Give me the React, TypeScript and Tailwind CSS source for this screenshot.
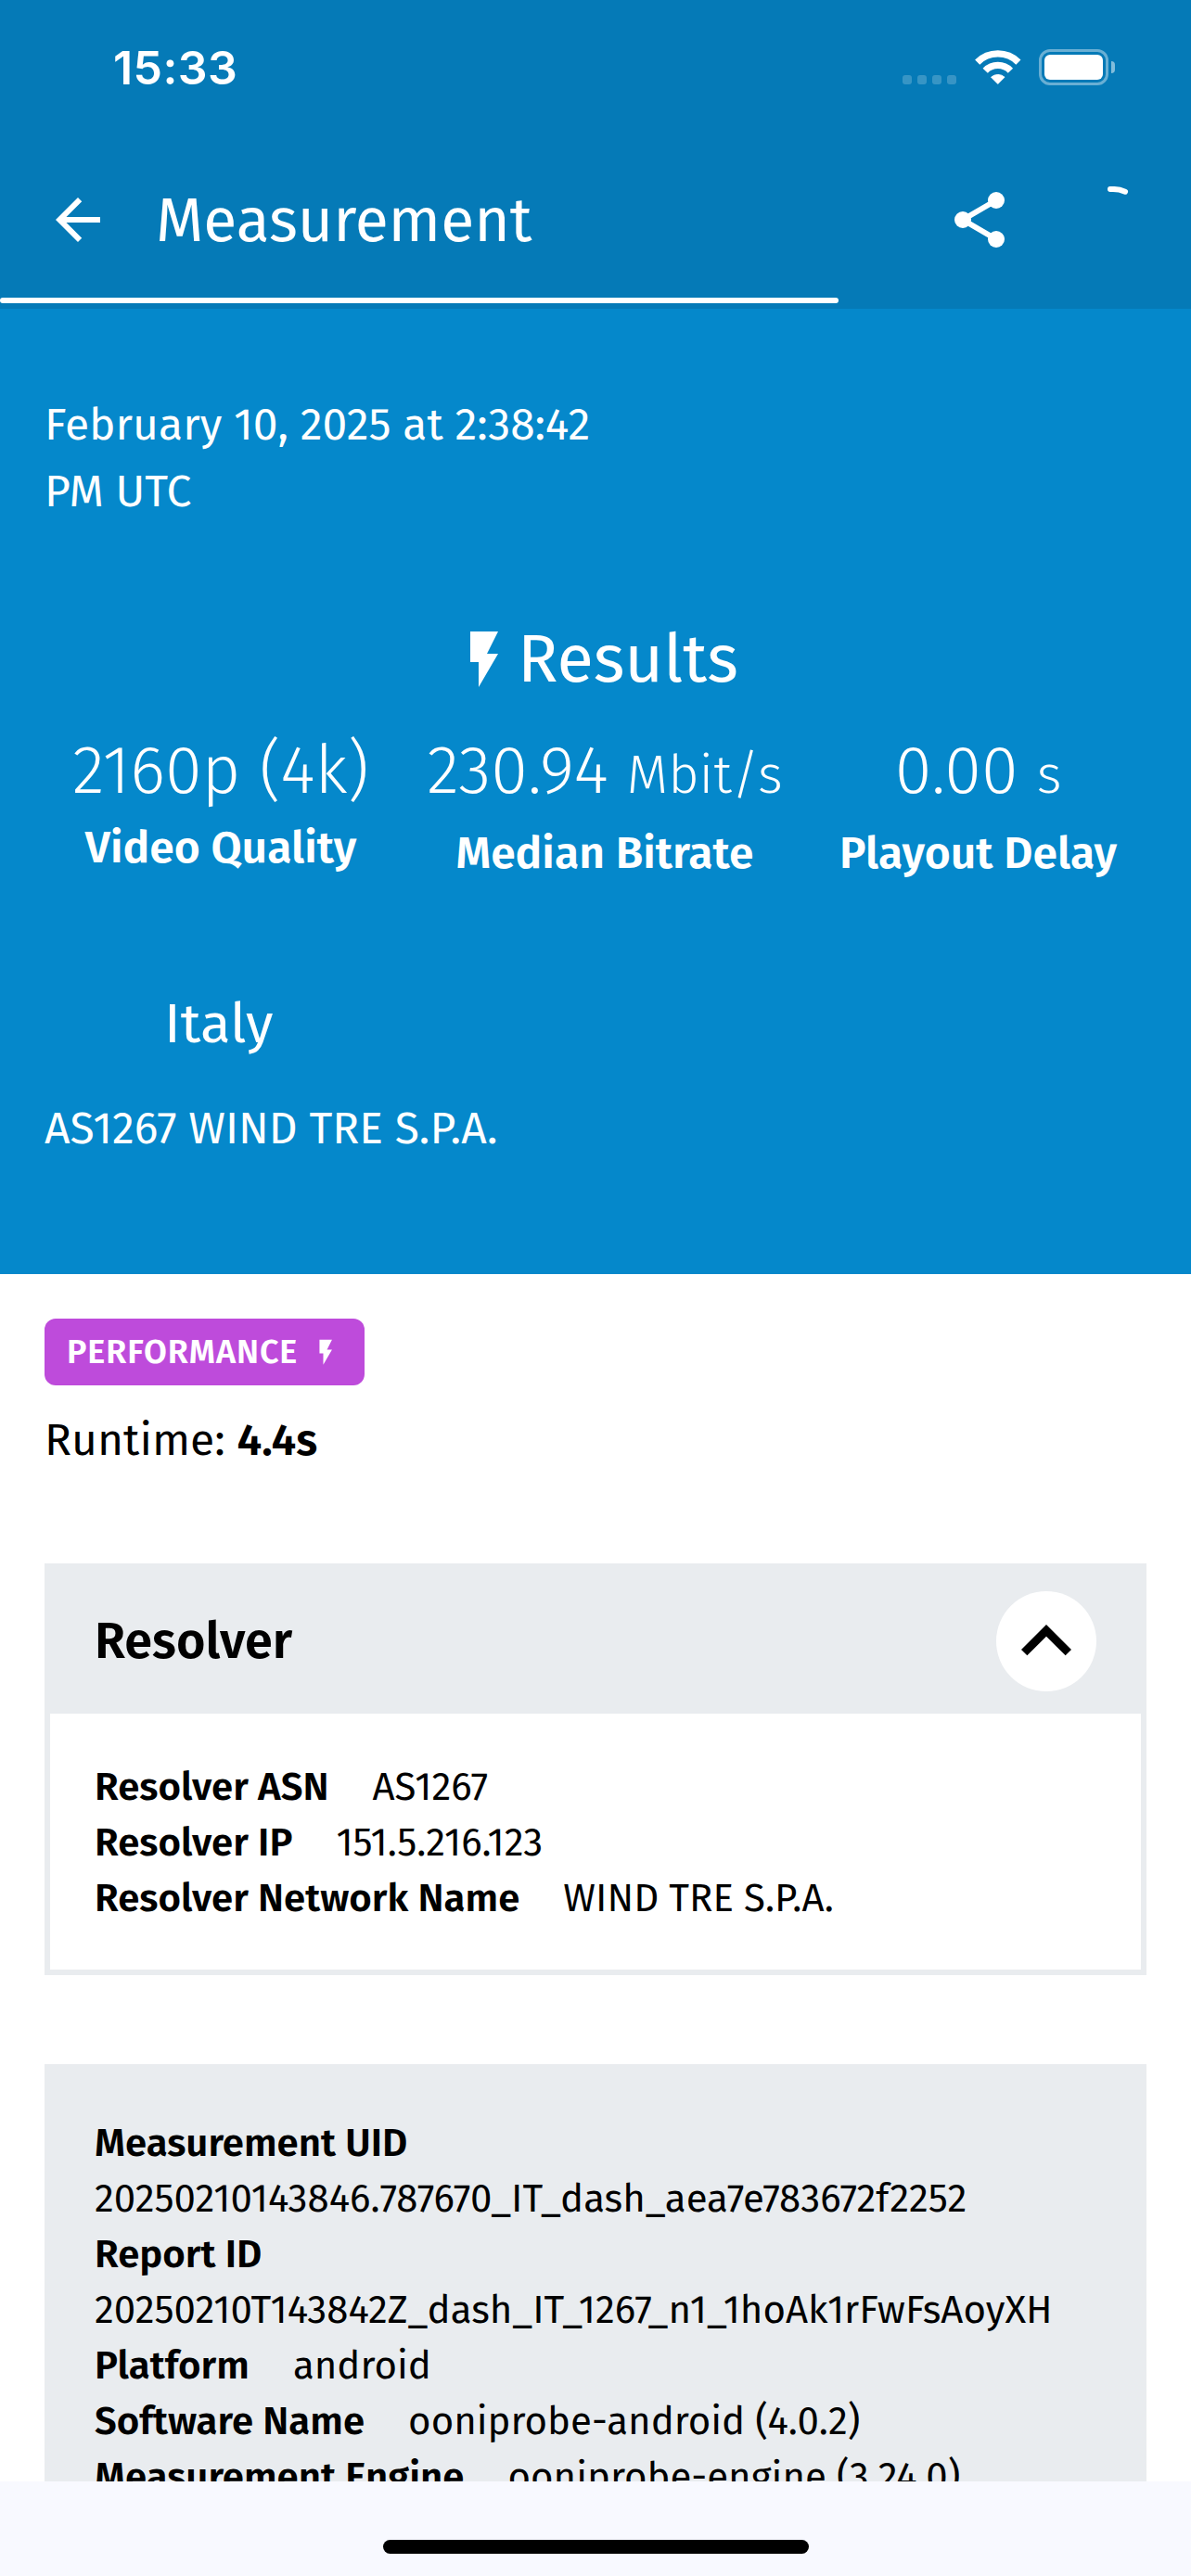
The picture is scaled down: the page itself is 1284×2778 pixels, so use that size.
import type { ReactNode } from "react";

function Bolt({ className }: { className: string }) {
  return (
    <svg viewBox="0 0 24 24" className={className} fill="currentColor" aria-hidden="true">
      <path d="M7 2v11h3v9l7-12h-4l4-8z" />
    </svg>
  );
}

function StatusBar() {
  return (
    <div className="flex h-[141px] items-start justify-between pr-[82px] pl-[122px]">
      <span className="mt-[43px] font-['Inter','Liberation_Sans',sans-serif] text-[50px] leading-[60px] font-semibold tracking-[0.4px]">
        15:33
      </span>
      <div className="mt-[53px] flex h-[39px] items-end">
        <div className="mb-px flex gap-[6px] opacity-20">
          <span className="size-[10px] rounded-[3px] bg-white" />
          <span className="size-[10px] rounded-[3px] bg-white" />
          <span className="size-[10px] rounded-[3px] bg-white" />
          <span className="size-[10px] rounded-[3px] bg-white" />
        </div>
        <svg viewBox="0 0 52 38" className="ml-[19px] h-[38px] w-[52px]" fill="none" aria-hidden="true">
          <path d="M3.7 13.1A31.3 31.3 0 0 1 47.9 13.1" stroke="white" strokeWidth="7.3" />
          <path d="M12.2 22.2A18.9 18.9 0 0 1 39.4 22.2" stroke="white" strokeWidth="7.4" />
          <path d="M25.8 36.4 18.6 29.2A11 11 0 0 1 33 29.2Z" fill="white" stroke="white" strokeWidth="1" strokeLinejoin="round" />
        </svg>
        <div className="ml-[18px] flex items-center">
          <div className="h-[39px] w-[75px] rounded-[12px] border-[3px] border-white/40 p-[3px]">
            <div className="size-full rounded-[6px] bg-white" />
          </div>
          <span className="ml-[3px] h-[13px] w-[4px] rounded-r-[4px] bg-white/50" />
        </div>
      </div>
    </div>
  );
}

function TopBar() {
  return (
    <div className="flex h-[192px] items-center px-12">
      <svg viewBox="0 0 24 24" className="size-[72px]" fill="currentColor" aria-hidden="true">
        <path d="M20 11H7.83l5.59-5.59L12 4l-8 8 8 8 1.41-1.41L7.83 13H20v-2z" />
      </svg>
      <h1 className="ml-12 flex-1 pt-[2px] text-[66px] leading-[84px]">Measurement</h1>
      <svg viewBox="0 0 24 24" className="size-[72px]" fill="currentColor" stroke="currentColor" aria-hidden="true">
        <circle cx="6" cy="12" r="3" stroke="none" />
        <circle cx="18" cy="5" r="3" stroke="none" />
        <circle cx="18" cy="19" r="3" stroke="none" />
        <path d="M18 5 6 12l12 7" fill="none" strokeWidth="2" />
      </svg>
      <svg viewBox="0 0 72 72" className="ml-[72px] size-[72px]" fill="none" aria-hidden="true">
        <path d="M33 3.1A33 33 0 0 1 49 5.7" stroke="white" strokeWidth="6" strokeLinecap="round" />
      </svg>
    </div>
  );
}

function Metric({ width, label, lower, children }: { width: string; label: string; lower?: boolean; children: ReactNode }) {
  return (
    <div className={`flex flex-col items-center whitespace-nowrap ${width}`}>
      <div className="h-[94px] text-[72px] leading-[94px] font-light">{children}</div>
      <div className={`text-5xl leading-[72px] font-semibold ${lower ? "mt-[6px]" : ""}`}>{label}</div>
    </div>
  );
}

function Row({ label, value }: { label: string; value: string }) {
  return (
    <div className="flex flex-wrap text-[42px] leading-[60px]">
      <span className="mr-[47px] font-semibold">{label}</span>
      <span>{value}</span>
    </div>
  );
}

export default function App() {
  return (
    <div className="flex h-[2778px] w-[1284px] flex-col overflow-hidden bg-white font-['Fira_Sans','Noto_Sans',sans-serif] text-black">
      <header className="relative h-[333px] shrink-0 bg-[#057AB7] text-white">
        <StatusBar />
        <TopBar />
        <div className="absolute bottom-[6px] left-0 h-[6px] w-[904px] rounded-full bg-white" />
      </header>

      <main className="min-h-0 flex-1 overflow-hidden">
        <section className="h-[1041px] bg-[#0588CB] px-12 pt-[89px] text-white">
          <p className="w-[594px] text-5xl leading-[72px]">February 10, 2025 at 2:38:42 PM UTC</p>
          <h2 className="mt-[97px] flex h-24 items-center justify-center pr-[2px] text-[72px] leading-[96px]">
            <Bolt className="size-[72px]" />
            Results
          </h2>
          <div className="mt-[25px] flex">
            <Metric width="w-[380px]" label="Video Quality">
              2160p (4k)
            </Metric>
            <Metric width="w-[448px]" label="Median Bitrate" lower>
              230.94 <span className="text-[57.6px] leading-none">Mbit/s</span>
            </Metric>
            <Metric width="w-[357px]" label="Playout Delay" lower>
              0.00 <span className="text-[57.6px] leading-none">s</span>
            </Metric>
          </div>
          <p className="mt-[106px] ml-[129px] text-6xl leading-[84px]">Italy</p>
          <p className="mt-[35px] text-5xl leading-[72px]">AS1267 WIND TRE S.P.A.</p>
        </section>

        <div className="px-12 pt-12">
          <div className="flex h-[72px] w-[345px] items-center justify-between rounded-[12px] bg-[#BE4BDB] pr-[26px] pl-6 text-white">
            <span className="text-4xl leading-[54px] font-semibold tracking-[0.9px]">PERFORMANCE</span>
            <Bolt className="size-[32.4px]" />
          </div>
          <p className="mt-[23px] text-5xl leading-[72px]">
            Runtime: <span className="font-semibold">4.4s</span>
          </p>

          <section className="mt-[97px] border-[6px] border-[#E9ECEF]">
            <div className="flex h-[156px] items-center justify-between bg-[#E9ECEF] px-12">
              <h3 className="text-[54px] leading-[72px] font-semibold">Resolver</h3>
              <div className="size-[108px] rounded-full bg-white">
                <svg viewBox="0 0 24 24" className="size-[108px]" fill="currentColor" aria-hidden="true">
                  <path d="M7.41 15.41 12 10.83l4.59 4.58L18 14l-6-6-6 6z" />
                </svg>
              </div>
            </div>
            <div className="px-12 pt-[49px] pb-[47px]">
              <Row label="Resolver ASN" value="AS1267" />
              <Row label="Resolver IP" value="151.5.216.123" />
              <Row label="Resolver Network Name" value="WIND TRE S.P.A." />
            </div>
          </section>

          <section className="mt-24 bg-[#E9ECEF] px-[54px] py-[55px]">
            <Row label="Measurement UID" value="20250210143846.787670_IT_dash_aea7e783672f2252" />
            <Row label="Report ID" value="20250210T143842Z_dash_IT_1267_n1_1hoAk1rFwFsAoyXH" />
            <Row label="Platform" value="android" />
            <Row label="Software Name" value="ooniprobe-android (4.0.2)" />
            <Row label="Measurement Engine" value="ooniprobe-engine (3.24.0)" />
          </section>
        </div>
      </main>

      <footer className="flex h-[102px] shrink-0 justify-center bg-[#F8F9FF] pt-[63px]">
        <div className="h-[15px] w-[459px] rounded-full bg-black" />
      </footer>
    </div>
  );
}
